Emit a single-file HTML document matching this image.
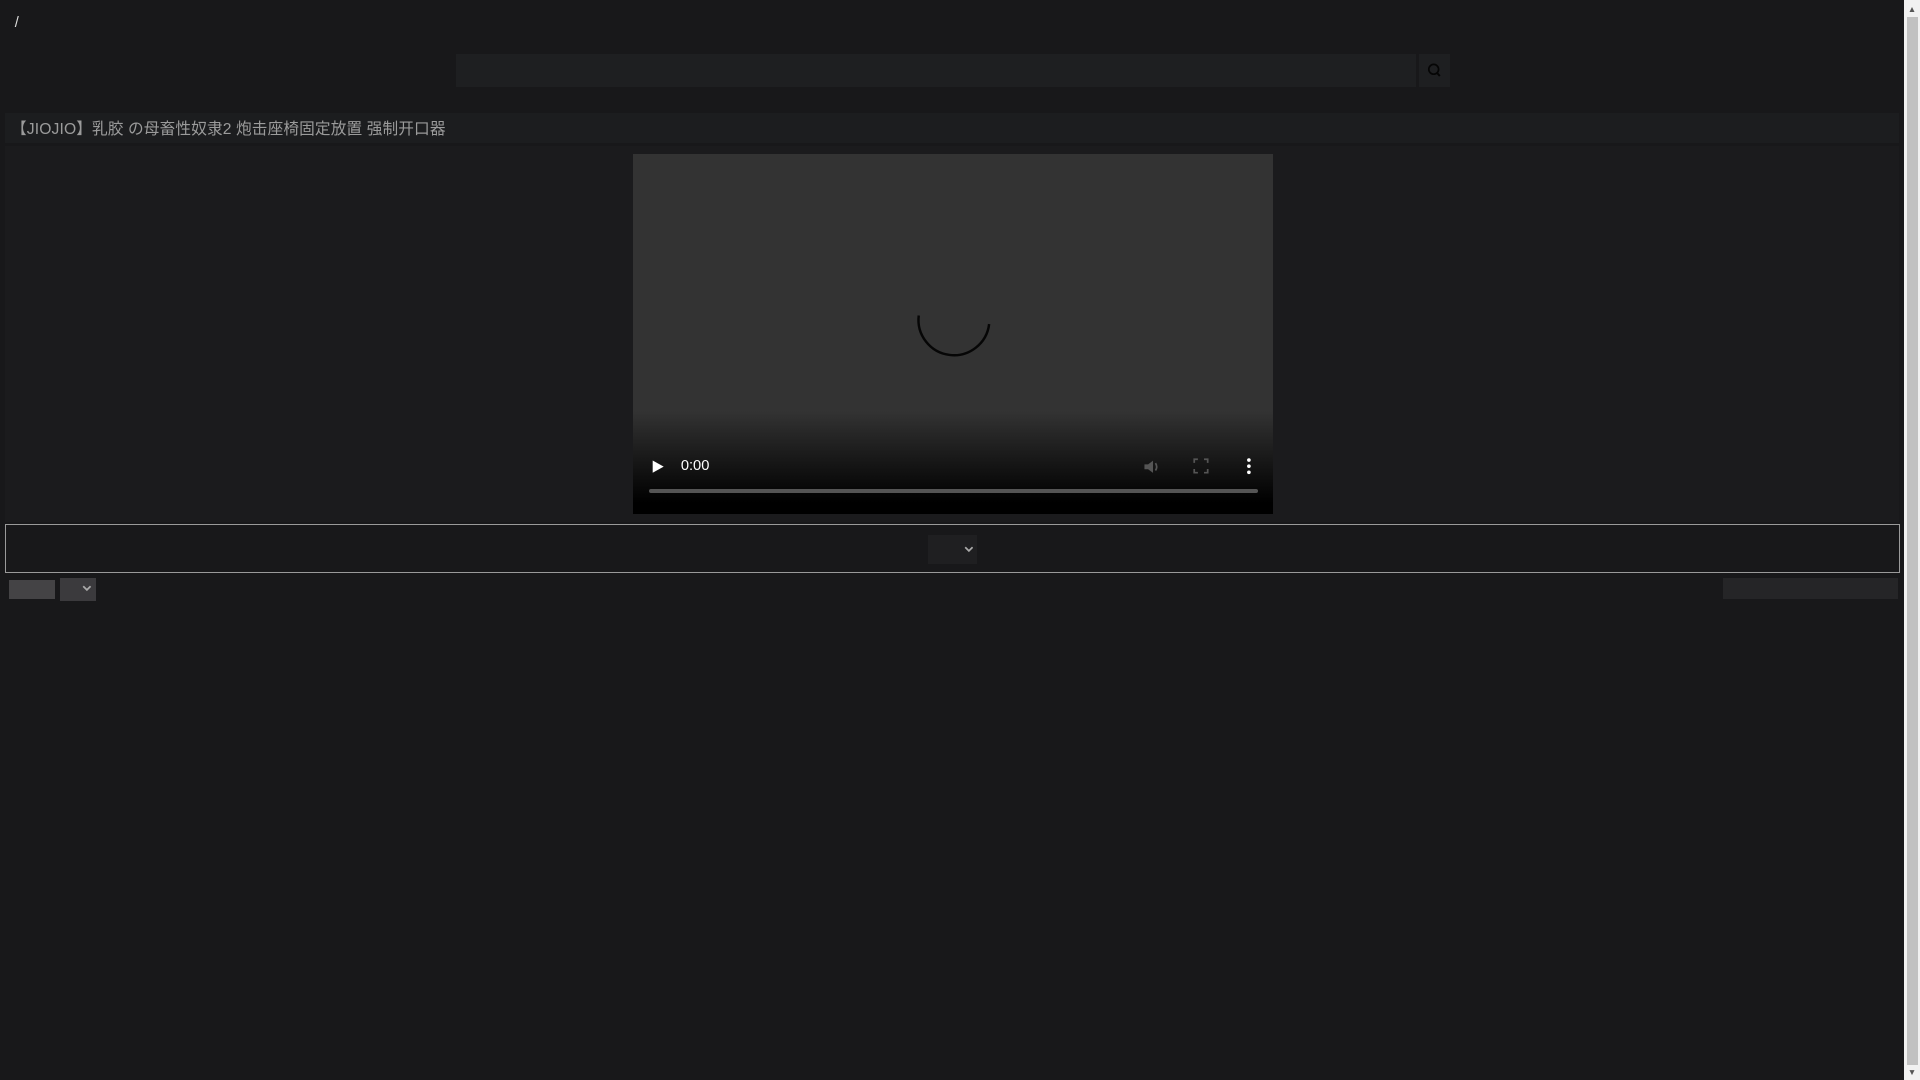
<!DOCTYPE html>
<html><head><meta charset="utf-8"><style>
html,body{margin:0;padding:0;background:#18181a;overflow:hidden;}
body{width:1568px;height:882px;zoom:1.22449;position:relative;font-family:"Liberation Sans","Noto Sans CJK JP",sans-serif;}
.a{position:absolute;box-sizing:border-box;}
</style></head><body>
<div class="a" style="left:12px;top:12px;color:#ddd;font-size:12px;">/</div>
<div class="a" style="left:372px;top:44px;width:784px;height:27px;background:#1e1f21;"></div>
<div class="a" style="left:1159px;top:44px;width:25px;height:27px;background:#1e1f21;">
<svg width="25" height="27" viewBox="0 0 25 27"><circle cx="12" cy="12.5" r="4" fill="none" stroke="#050505" stroke-width="1.4"/><line x1="14.8" y1="15.5" x2="17" y2="18" stroke="#050505" stroke-width="1.6"/></svg></div>
<div class="a" style="left:4px;top:92px;width:1547px;height:25px;background:#1c1d1f;"></div>
<div class="a" style="left:9px;top:95px;color:#9b9b9b;font-size:12.8px;letter-spacing:0.1px;white-space:nowrap;">【JIOJIO】乳胶 の母畜性奴隶2 炮击座椅固定放置 强制开口器</div>
<div class="a" style="left:4px;top:119px;width:1547px;height:307px;background:#1b1b1d;"></div>
<div class="a" style="left:517px;top:126px;width:523px;height:294px;background:linear-gradient(#333 0,#333 210px,#000 285px,#000 100%);"></div>
<svg class="a" style="left:745px;top:238px" width="66" height="60"><path d="M5.5 20 A 28.5 28.5 0 0 0 63 27" fill="none" stroke="#060606" stroke-width="2"/></svg>
<svg class="a" style="left:530px;top:374px" width="14" height="14"><path d="M3 2 L12 7 L3 12Z" fill="#fff"/></svg>
<div class="a" style="left:556px;top:374px;color:#fff;font-size:12px;">0:00</div>
<svg class="a" style="left:933px;top:373px" width="16" height="16"><path d="M2 6h3l4-3v10l-4-3H2z" fill="#555"/><path d="M11 5q2 3 0 6" stroke="#555" fill="none" stroke-width="1.4"/></svg>
<svg class="a" style="left:974px;top:374px" width="13" height="13"><path d="M1 4V1h3M9 1h3v3M12 9v3H9M4 12H1V9" stroke="#555" fill="none" stroke-width="1.4"/></svg>
<svg class="a" style="left:1016px;top:373px" width="8" height="15"><circle cx="4" cy="2.5" r="1.5" fill="#fff"/><circle cx="4" cy="7.5" r="1.5" fill="#fff"/><circle cx="4" cy="12.5" r="1.5" fill="#fff"/></svg>
<div class="a" style="left:530px;top:399px;width:497px;height:4px;border-radius:2px;background:#555;"></div>
<div class="a" style="left:4px;top:428px;width:1548px;height:40px;border:1px solid #9a9a9a;"></div>
<div class="a" style="left:758px;top:437px;width:40px;height:24px;background:#1f1f21;"><svg class="a" style="left:29px;top:9px" width="8" height="6"><path d="M1 1l3 3 3-3" stroke="#aaa" fill="none" stroke-width="1.4"/></svg></div>
<div class="a" style="left:7px;top:474px;width:38px;height:15px;background:#444345;"></div>
<div class="a" style="left:49px;top:472px;width:29px;height:19px;background:#3b3a3d;"><svg class="a" style="left:18px;top:6px" width="8" height="6"><path d="M1 1l3 3 3-3" stroke="#aaa" fill="none" stroke-width="1.4"/></svg></div>
<div class="a" style="left:1407px;top:472px;width:143px;height:17px;background:#252527;"></div>
<div class="a" style="left:1555px;top:0;width:13px;height:882px;background:#f1f1f1;"></div>
<div class="a" style="left:1557px;top:14px;width:9px;height:856px;background:#c1c1c1;"></div>
<div class="a" style="left:1558px;top:3px;font-size:7px;color:#555;">▲</div>
<div class="a" style="left:1558px;top:871px;font-size:7px;color:#555;">▼</div>
</body></html>
